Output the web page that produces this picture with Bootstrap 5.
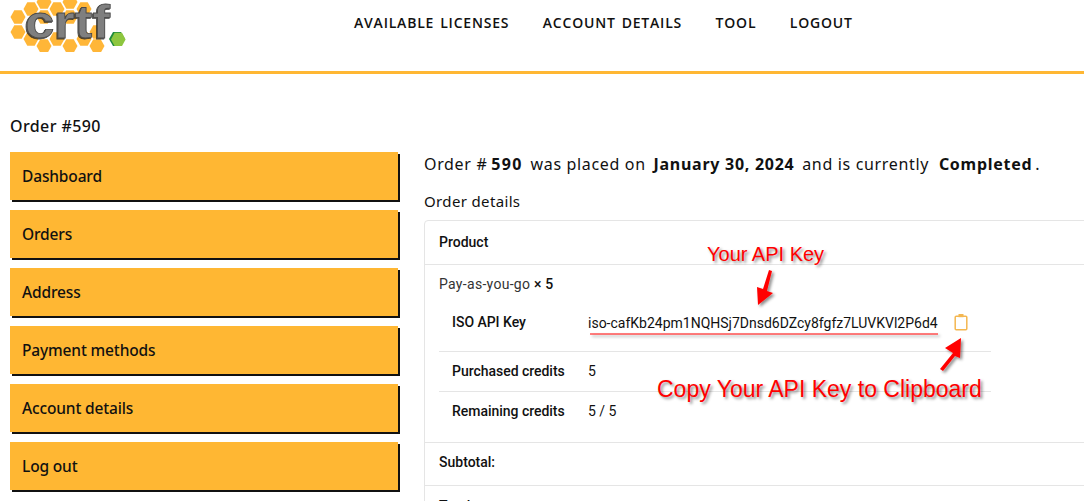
<!DOCTYPE html>
<html lang="en"><head><meta charset="utf-8"><title>Order #590</title>
<link href="https://cdn.jsdelivr.net/npm/bootstrap@5.3.0/dist/css/bootstrap.min.css" rel="stylesheet">
<style>
html,body{height:501px;overflow:hidden}
body{font-family:"Noto Sans",sans-serif;color:#111;background:#fff;position:relative}
.site-head{height:74px;border-bottom:3px solid #ffb733;padding-left:10px}
.logo-box{width:120px;height:52px;flex:none}
.logo-word{font-family:"Liberation Sans",sans-serif;font-weight:700;font-size:47px;fill:#7f7f7f;stroke:#4a4a4a;stroke-width:.8px}
.top-links{margin-left:224px;padding-top:14px;gap:33.5px}
.top-links a{font-family:"Open Sans",sans-serif;font-weight:600;font-size:14px;letter-spacing:.8px;word-spacing:1.5px;color:#111;text-decoration:none;line-height:18px}
.page-wrap{padding:42px 0 0 10px}
.order-title{font-size:16px;font-weight:500;line-height:20px;margin:0 0 16px;letter-spacing:.4px}
.side-col{width:388px;flex:none;gap:10px}
.side-link{display:block;height:48px;line-height:48px;padding-left:12px;background:#ffb733;color:#111;font-weight:500;font-size:15.5px;letter-spacing:-.15px;text-decoration:none;box-shadow:2px 2px 0 #111}
.main-col{margin-left:26px;width:800px;flex:none}
.lead-line{font-size:16px;line-height:24px;letter-spacing:.66px;margin:0 0 13px;white-space:nowrap}
.lead-line b{font-weight:700;margin:0 3px;letter-spacing:.72px}
.lead-line .order-no{margin-left:-1px;letter-spacing:1.35px}
.lead-line .order-state{margin-left:5px}
.details-label{font-size:15px;letter-spacing:.35px;line-height:24px;margin:0 0 7px}
.order-card{font-family:Roboto,sans-serif;font-size:14px;border:1px solid #e5e5e5;border-radius:4px;color:#111}
.card-row{padding:0 14px;border-bottom:1px solid #e5e5e5}
.head-row{height:44px;line-height:42px;font-weight:500}
.prod-row{height:178px;padding-top:9px}
.prod-name{line-height:20px;color:#333;margin-bottom:9px;letter-spacing:.3px}
.prod-name b{font-weight:500;color:#111;letter-spacing:.1px}
.meta-row{width:552px;height:40px;border-bottom:1px solid #e5e5e5;padding-left:13px;line-height:39px}
.meta-row:last-child{border-bottom:0}
.meta-key{width:136px;flex:none;font-weight:500;letter-spacing:-.03px}
.key-row{height:49px;line-height:38px}
.key-val{font-size:14px;width:350px;flex:none;line-height:40px}
.copy-ico{width:16px;height:18px;margin:10px 0 0 15px;flex:none}
.sub-row{height:43px;line-height:38px;font-weight:500}
.total-row{line-height:40px}
.note-layer{position:absolute;left:0;top:0;width:1084px;height:501px;pointer-events:none}
.note-text{position:absolute;font-family:"Liberation Sans",sans-serif;color:#f00;font-size:20px;line-height:24px;white-space:nowrap;text-shadow:2px 2px 3px rgba(0,0,0,.45)}
.note-a{left:707px;top:242px}
.note-b{left:657px;top:376px;font-size:23px;line-height:26px}
</style></head><body>
<header class="site-head d-flex">
  <svg class="logo-box" viewBox="0 0 120 52" aria-label="crtf logo">
    <defs><filter id="ls" x="-10%" y="-10%" width="120%" height="120%"><feDropShadow dx="-1" dy="1" stdDeviation=".7" flood-color="#222" flood-opacity=".8"/></filter></defs>
    <g fill="#ffb638">
      <polygon points="-7.5,0 -3.7,-6.7 3.7,-6.7 7.5,0 3.7,6.7 -3.7,6.7" transform="translate(34,2)"/>
      <polygon points="-7.5,0 -3.7,-6.7 3.7,-6.7 7.5,0 3.7,6.7 -3.7,6.7" transform="translate(60,2)"/>
      <polygon points="-7.5,0 -3.7,-6.7 3.7,-6.7 7.5,0 3.7,6.7 -3.7,6.7" transform="translate(21,9)"/>
      <polygon points="-7.5,0 -3.7,-6.7 3.7,-6.7 7.5,0 3.7,6.7 -3.7,6.7" transform="translate(47,9)"/>
      <polygon points="-7.5,0 -3.7,-6.7 3.7,-6.7 7.5,0 3.7,6.7 -3.7,6.7" transform="translate(74,9)"/>
      <polygon points="-7.5,0 -3.7,-6.7 3.7,-6.7 7.5,0 3.7,6.7 -3.7,6.7" transform="translate(8,17)"/>
      <polygon points="-7.5,0 -3.7,-6.7 3.7,-6.7 7.5,0 3.7,6.7 -3.7,6.7" transform="translate(34,17)"/>
      <polygon points="-7.5,0 -3.7,-6.7 3.7,-6.7 7.5,0 3.7,6.7 -3.7,6.7" transform="translate(60,17)"/>
      <polygon points="-7.5,0 -3.7,-6.7 3.7,-6.7 7.5,0 3.7,6.7 -3.7,6.7" transform="translate(8,32)"/>
      <polygon points="-7.5,0 -3.7,-6.7 3.7,-6.7 7.5,0 3.7,6.7 -3.7,6.7" transform="translate(21,39)"/>
      <polygon points="-7.5,0 -3.7,-6.7 3.7,-6.7 7.5,0 3.7,6.7 -3.7,6.7" transform="translate(47,39)"/>
      <polygon points="-7.5,0 -3.7,-6.7 3.7,-6.7 7.5,0 3.7,6.7 -3.7,6.7" transform="translate(74,39)"/>
      <polygon points="-7.5,0 -3.7,-6.7 3.7,-6.7 7.5,0 3.7,6.7 -3.7,6.7" transform="translate(34,46)"/>
      <polygon points="-7.5,0 -3.7,-6.7 3.7,-6.7 7.5,0 3.7,6.7 -3.7,6.7" transform="translate(60,46)"/>
      <polygon points="-7.5,0 -3.7,-6.7 3.7,-6.7 7.5,0 3.7,6.7 -3.7,6.7" transform="translate(87,46)"/>
      <polygon points="-7.5,0 -3.7,-6.7 3.7,-6.7 7.5,0 3.7,6.7 -3.7,6.7" transform="translate(87,32)"/>
    </g>
    <text class="logo-word" x="15" y="38" textLength="85" lengthAdjust="spacingAndGlyphs" filter="url(#ls)">crtf</text>
    <polygon points="-8,0 -4,-7 4,-7 8,0 4,7 -4,7" fill="#1f8a3c" transform="translate(107,39)"/>
    <polygon points="-7,0 -3.4,-6.6 4,-6.6 7.6,0 4,6.6 -3.4,6.6" fill="#8dc63f" transform="translate(108,39.4)"/>
  </svg>
  <nav class="top-links d-flex align-items-start">
    <a href="#">AVAILABLE LICENSES</a><a href="#">ACCOUNT DETAILS</a><a href="#">TOOL</a><a href="#">LOGOUT</a>
  </nav>
</header>
<div class="page-wrap">
  <h1 class="order-title">Order #590</h1>
  <div class="d-flex align-items-start">
    <aside class="side-col d-flex flex-column">
      <a class="side-link" href="#">Dashboard</a>
      <a class="side-link" href="#">Orders</a>
      <a class="side-link" href="#">Address</a>
      <a class="side-link" href="#">Payment methods</a>
      <a class="side-link" href="#">Account details</a>
      <a class="side-link" href="#">Log out</a>
    </aside>
    <main class="main-col">
      <p class="lead-line">Order # <b class="order-no">590</b> was placed on <b>January 30, 2024</b> and is currently <b class="order-state">Completed</b>.</p>
      <p class="details-label">Order details</p>
      <section class="order-card">
        <div class="card-row head-row">Product</div>
        <div class="card-row prod-row">
          <div class="prod-name">Pay-as-you-go <b>× 5</b></div>
          <div class="meta-row key-row d-flex">
            <div class="meta-key">ISO API Key</div>
            <div class="key-val">iso-cafKb24pm1NQHSj7Dnsd6DZcy8fgfz7LUVKVl2P6d4</div>
            <svg class="copy-ico" viewBox="0 0 16 18" fill="none" stroke="#f4b751" stroke-width="1.5"><rect x="2.2" y="3.2" width="11.6" height="13.6" rx="1"/><rect x="5.5" y="1" width="5" height="3.2" fill="#f4b751" stroke="none"/></svg>
          </div>
          <div class="meta-row d-flex"><div class="meta-key">Purchased credits</div><div>5</div></div>
          <div class="meta-row d-flex"><div class="meta-key">Remaining credits</div><div>5 / 5</div></div>
        </div>
        <div class="card-row sub-row">Subtotal:</div>
        <div class="card-row sub-row total-row">Total:</div>
      </section>
    </main>
  </div>
</div>
<div class="note-layer">
  <span class="note-text note-a">Your API Key</span>
  <span class="note-text note-b">Copy Your API Key to Clipboard</span>
  <svg width="1084" height="501" class="position-absolute top-0 start-0">
    <defs><filter id="sh" x="-50%" y="-50%" width="200%" height="200%"><feDropShadow dx="2" dy="2" stdDeviation="1.5" flood-color="#000" flood-opacity=".45"/></filter></defs>
    <g filter="url(#sh)">
      <line x1="590" y1="334" x2="938" y2="334" stroke="#f00" stroke-width="1.2"/>
      <polygon points="769,270 772,271 767,291 773,293 758,305 757,287 763,289" fill="#f00"/>
      <polygon points="940,369 953,353 945,348 961,338 960,358 955,356 943,371" fill="#f00"/>
    </g>
  </svg>
</div>
<script src="https://cdn.jsdelivr.net/npm/bootstrap@5.3.0/dist/js/bootstrap.bundle.min.js"></script>
</body></html>
